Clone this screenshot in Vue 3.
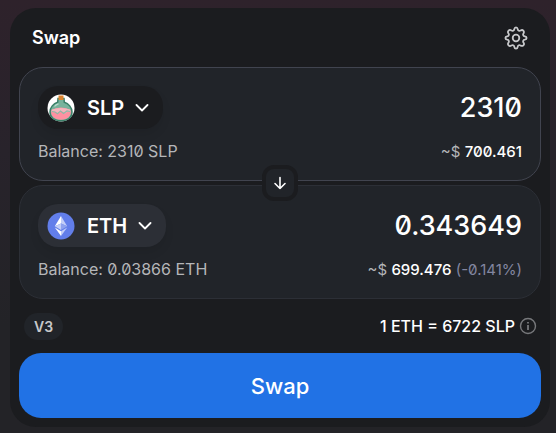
<script setup>
import { ref } from 'vue'

const sellAmount = ref('2310')
const buyAmount = ref('0.343649')
</script>

<template>
  <main class="page">
    <form class="card" @submit.prevent>
      <header class="header">
        <h1 class="title">Swap</h1>
        <button class="icon-button" type="button" aria-label="Settings">
          <svg width="24" height="24" viewBox="0 0 24 24" fill="none" stroke="currentColor" stroke-width="1.8" stroke-linejoin="round">
            <path d="M10.3 3.2Q10.6 1.4 12 1.4T13.7 3.2C13.9 4.8 15.4 5.4 16.7 4.4Q18.2 3.4 19.3 4.6T19.6 7.3C18.6 8.6 19.2 10.1 20.8 10.3Q22.6 10.6 22.6 12T20.8 13.7C19.2 13.9 18.6 15.4 19.6 16.7Q20.6 18.2 19.4 19.3T16.7 19.6C15.4 18.6 13.9 19.2 13.7 20.8Q13.4 22.6 12 22.6T10.3 20.8C10.1 19.2 8.6 18.6 7.3 19.6Q5.8 20.6 4.6 19.4T4.4 16.7C5.4 15.4 4.8 13.9 3.2 13.7Q1.4 13.4 1.4 12T3.2 10.3C4.8 10.1 5.4 8.6 4.4 7.3Q3.4 5.8 4.6 4.6T7.3 4.4C8.6 5.4 10.1 4.8 10.3 3.2Z" />
            <circle cx="12" cy="12" r="3.3" />
          </svg>
        </button>
      </header>

      <div class="panels">
        <section class="panel panel-active">
          <div class="row">
            <button class="token token-dark" type="button">
              <svg class="coin" width="28" height="28" viewBox="0 0 28 28">
                <circle cx="14" cy="14" r="13.5" fill="#fff" />
                <path d="M11 4.5h6l.3 3.7C21.5 9.500 25 13.500 25 18C25 23.500 20.500 26.700 14 26.700S3 23.500 3 18C3 13.500 6.500 9.500 10.700 8.200Z" fill="#78b39c" stroke="#3b8069" stroke-width="1.5" />
                <path d="M4.500 16q4-2.500 9.500-2.500t9.500 2.500q1 3-.5 5.500c-2 3-5 4.200-9 4.200s-7-1.200-9-4.200q-1.500-2.500-.5-5.500Z" fill="#ff91a1" />
                <path d="M5 15.500q9-3 18 0l.5 2.500-2.500-.5-3 2-3.500-2.500-3.500 2.500-3.500-2-3 .5Z" fill="#f5b5bd" />
                <path d="M5 17.500l3 .5 2.500 1.700 3-2.700 3 2.500 3.500-2.500 3 .5" fill="none" stroke="#8fb8a6" stroke-width="1.2" />
                <path d="M7.500 12.500q1.500-2 4-2.700" fill="none" stroke="#b7dccd" stroke-width="1.2" />
                <path d="M11.5 1.500h5v4.500h-5Z" fill="#dc8430" />
              </svg>
              <span>SLP</span>
              <svg class="chevron" width="14" height="8" viewBox="0 0 14 8" fill="none" stroke="currentColor" stroke-width="1.8" stroke-linecap="round" stroke-linejoin="round"><path d="M1.5 1L7 6.500 12.500 1" /></svg>
            </button>
            <input v-model="sellAmount" class="amount" type="text" inputmode="decimal" aria-label="SLP amount">
          </div>
          <div class="row details">
            <span>Balance: 2310 SLP</span>
            <span class="value">~$ <strong>700.461</strong></span>
          </div>
        </section>

        <section class="panel">
          <div class="row">
            <button class="token" type="button">
              <svg class="coin" width="28" height="28" viewBox="0 0 28 28">
                <circle cx="14" cy="14" r="13.5" fill="#627eea" />
                <path d="M14 4v7.500l6.200 2.800Z" fill="#c3cef8" />
                <path d="M14 4L7.800 14.300l6.200-2.800Z" fill="#fff" />
                <path d="M14 11.500v6.400l6.200-3.600Z" fill="#8fa3ef" />
                <path d="M14 11.500v6.400l-6.200-3.600Z" fill="#c3cef8" />
                <path d="M14 19.200V24l6.200-8.500Z" fill="#c3cef8" />
                <path d="M14 19.200V24l-6.200-8.500Z" fill="#fff" />
              </svg>
              <span>ETH</span>
              <svg class="chevron" width="14" height="8" viewBox="0 0 14 8" fill="none" stroke="currentColor" stroke-width="1.8" stroke-linecap="round" stroke-linejoin="round"><path d="M1.5 1L7 6.500 12.500 1" /></svg>
            </button>
            <input v-model="buyAmount" class="amount" type="text" inputmode="decimal" aria-label="ETH amount">
          </div>
          <div class="row details">
            <span>Balance: 0.03866 ETH</span>
            <span class="value">~$ <strong>699.476</strong> <span class="impact">(-0.141%)</span></span>
          </div>
        </section>

        <button class="flip" type="button" aria-label="Switch tokens">
          <svg width="14" height="14" viewBox="0 0 14 14" fill="none" stroke="currentColor" stroke-width="1.6" stroke-linecap="round" stroke-linejoin="round"><path d="M7 1.500v11M2 7.500l5 5 5-5" /></svg>
        </button>
      </div>

      <div class="rate-row">
        <span class="version">V3</span>
        <span class="rate">
          1 ETH = 6722 SLP
          <svg width="18" height="18" viewBox="0 0 18 18" fill="none" stroke="#77787b" stroke-width="1.4" aria-hidden="true"><circle cx="9" cy="9" r="7.5" /><path d="M9 8v5M9 5v1.600" stroke-width="1.8" /></svg>
        </span>
      </div>

      <button class="submit" type="submit">Swap</button>
    </form>
  </main>
</template>

<style>
body {
  margin: 0;
  background: #232327;
}
</style>

<style scoped>
.page {
  box-sizing: border-box;
  min-height: 100vh;
  padding: 8px 6px 6px 10px;
  background: linear-gradient(180deg, #2e222b 0%, #28232b 35%, #232327 75%);
  font-family: Inter, "Liberation Sans", sans-serif;
  font-feature-settings: "zero";
  color: #fff;
}
button,
input {
  margin: 0;
  padding: 0;
  border: 0;
  background: none;
  color: inherit;
  font: inherit;
  font-feature-settings: inherit;
}
button {
  cursor: pointer;
}
svg {
  display: block;
  flex: none;
}
.card {
  box-sizing: border-box;
  padding: 0 9px 9px;
  border-radius: 26px;
  background: #1b1c1f;
}
.header {
  display: flex;
  align-items: center;
  justify-content: space-between;
  height: 59px;
  padding: 0 13px;
}
.title {
  margin: 0;
  font-size: 18px;
  font-weight: 600;
  line-height: 24px;
}
.icon-button {
  color: #c7c8ca;
}
.panels {
  position: relative;
  display: grid;
  gap: 4px;
}
.panel {
  display: grid;
  gap: 12px;
  padding: 18px;
  border: 1px solid #2c2f36;
  border-radius: 24px;
  background: #212429;
}
.panel-active {
  border-color: #41444f;
}
.row {
  display: flex;
  align-items: center;
  justify-content: space-between;
}
.token {
  display: flex;
  flex: none;
  align-items: center;
  height: 43px;
  padding: 0 14px 0 9px;
  border-radius: 20px;
  background: #2c2f36;
  font-size: 20px;
  font-weight: 600;
  box-shadow: 0 6px 10px rgb(0 0 0 / 8%);
}
.token-dark {
  background: #1b1c1f;
}
.coin {
  margin-right: 12px;
}
.chevron {
  margin-left: 11px;
}
.amount {
  width: 100%;
  min-width: 0;
  font-size: 27px;
  font-weight: 500;
  line-height: 36px;
  text-align: right;
  outline: none;
}
.details {
  color: #b5b6b9;
  font-size: 16px;
  line-height: 21px;
}
.details .value {
  font-size: 15px;
}
.details strong {
  color: #fff;
  font-weight: 500;
}
.details .impact {
  color: #8386a0;
}
.flip {
  position: absolute;
  top: 50%;
  left: 50%;
  display: grid;
  place-items: center;
  width: 36px;
  height: 36px;
  border: 4px solid #1b1c1f;
  border-radius: 12px;
  background: #212429;
  transform: translate(-50%, -50%);
}
.rate-row {
  display: flex;
  align-items: center;
  justify-content: space-between;
  height: 54px;
  padding: 0 4px 0 5px;
}
.version {
  padding: 4px 10px;
  border-radius: 14px;
  background: #212429;
  color: #c7c8ca;
  font-size: 14px;
  font-weight: 600;
  line-height: 19px;
}
.rate {
  display: flex;
  align-items: center;
  gap: 4px;
  font-size: 16px;
  font-weight: 500;
}
.submit {
  display: block;
  width: 100%;
  height: 65px;
  border-radius: 22px;
  background: #2172e5;
  font-size: 22px;
  font-weight: 500;
}
</style>
